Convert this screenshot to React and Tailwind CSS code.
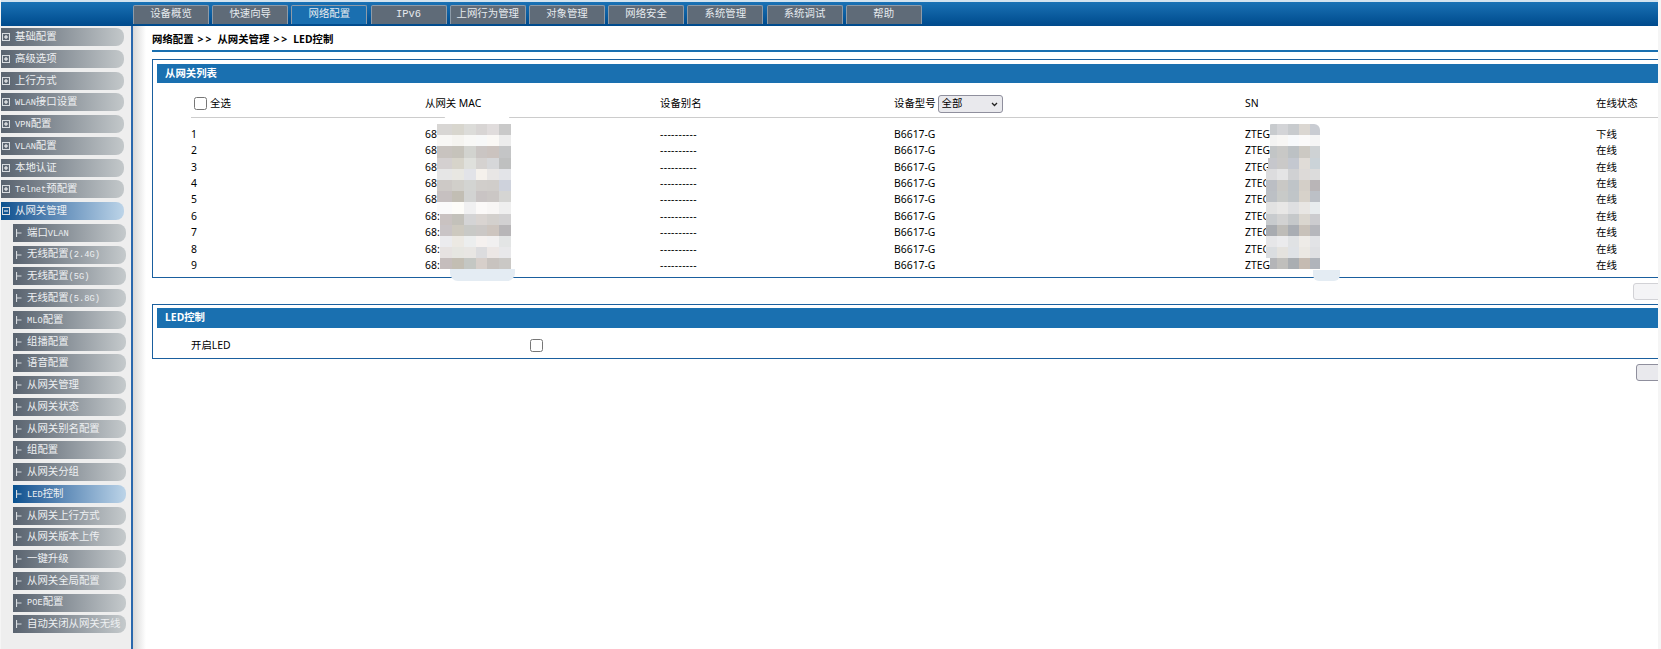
import React from "react";

const cjk = '"Noto Sans CJK SC"';

const tabs = ["设备概览", "快速向导", "网络配置", "IPv6", "上网行为管理", "对象管理", "网络安全", "系统管理", "系统调试", "帮助"];

const topMenu = ["基础配置", "高级选项", "上行方式", "WLAN接口设置", "VPN配置", "VLAN配置", "本地认证", "Telnet预配置"];

const subMenu = [
  "端口VLAN",
  "无线配置(2.4G)",
  "无线配置(5G)",
  "无线配置(5.8G)",
  "MLO配置",
  "组播配置",
  "语音配置",
  "从网关管理",
  "从网关状态",
  "从网关别名配置",
  "组配置",
  "从网关分组",
  "LED控制",
  "从网关上行方式",
  "从网关版本上传",
  "一键升级",
  "从网关全局配置",
  "POE配置",
  "自动关闭从网关无线",
];

const rows = [
  { id: 1, mac: "68", sn: "ZTEG", status: "下线" },
  { id: 2, mac: "68", sn: "ZTEG", status: "在线" },
  { id: 3, mac: "68", sn: "ZTEG", status: "在线" },
  { id: 4, mac: "68", sn: "ZTEG", status: "在线" },
  { id: 5, mac: "68", sn: "ZTEG", status: "在线" },
  { id: 6, mac: "68:", sn: "ZTEG", status: "在线" },
  { id: 7, mac: "68:", sn: "ZTEG", status: "在线" },
  { id: 8, mac: "68:", sn: "ZTEG", status: "在线" },
  { id: 9, mac: "68:", sn: "ZTEG", status: "在线" },
];

// 打码区域的色块
const mosaicMac = [
  "d8d6d4 d8d6ce dcdcd9 d8d5d4 e0dcdc c9c9c9",
  "f8f7f5 f5f4f0 f8f8f6 f7f8f8 faf8f5 ececec",
  "c8c3bf c6c3bb d2d3cf cac5c3 cbc3bf c4c5c6",
  "d4d0d0 d7d4ca dfe0dc d5d2d0 d6d7d9 bfc0c0",
  "e6e6e6 e8e7e2 e2e3e8 f5f1ec e8e6e5 e3e4e8",
  "cdc9c6 d1cfca d3d4d2 d1cecb d0cdca ced2dc",
  "c6c0c0 c2beb4 d2d3d2 c9c4c4 cbc7c5 d5d5d3",
  "fafafa fdfcf8 f0f0f1 fbf9f8 f8f6f5 efefef",
  "c9c2c1 c3c1ba d4d4d5 d9d4d1 d3d0cd d2d1d2",
  "c9c4c6 cdc9bf c8c9c6 cbc8c6 cdc5bf b8b6b8",
  "ebebee ece9e3 eceeee f5f1ef f1f0f0 e3e5e5",
  "e6e2e1 e6e6e1 e8e6e3 dcdcde ece7e5 e8e8ea",
  "c5bdbc c3beb3 c4c7c3 d7cfca c8c3bf cac8c5",
];

const mosaicSn = [
  "c8cbce d3d4d7 c8cbce dbd7d2 c9ccd2",
  "f3f3f2 f7f6f4 f7f9fb fbfafa f5f5f5",
  "c2c5c6 c8c8c6 bcc1c4 ccc9c3 ced2d4",
  "c6c7cc cac9c8 c4c8d0 e0dcd7 cbd3d8",
  "dcdcde e4e4e5 d0d1d3 dddad8 dcdcdc",
  "bbbec4 c9c8c5 bfc4c8 d4cfc8 b9b5b7",
  "bcc0c5 c8cac8 c0c5c8 d7d2ca bcc0c6",
  "e2e2e2 e8e7e6 dedfe1 e8e6e3 e8ecee",
  "c8cbce d2d2d2 c5c8ca dad6cf cccccf",
  "a8abb0 bebcb8 a9adb3 c8c1b9 b6b7bc",
  "e6e6e8 ebebed e0e2e4 eeebe7 e2e3e6",
  "dadde0 e4e2de dfe2e6 ebe8e3 dfe0e3",
  "b4b5b8 c0bfbc aaaeb2 c5bbb2 b0b4bb",
];

const macInset = [0, 0, 0, 0, 0, 0, 0, 0, 3, 3, 3, 3, 3];
const snInset = [4, 4, 4, 2, 0, 0, 0, 0, 0, 0, 0, 0, 4];

// 侧边栏的西文是等宽的半角宽度
const MenuText = ({ text }) => (
  <span className="whitespace-nowrap">
    {text.split(/([A-Za-z0-9.()]+)/).map((part, i) =>
      /^[A-Za-z0-9.()]+$/.test(part) ? (
        <span key={i} className="font-['Liberation_Mono',monospace] text-[8.7px]">
          {part}
        </span>
      ) : (
        <span key={i}>{part}</span>
      )
    )}
  </span>
);

const BoxIcon = ({ open }) => (
  <svg width="8" height="8" viewBox="0 0 8 8" className="shrink-0">
    <rect x="0.5" y="0.5" width="7" height="7" fill="none" stroke="#d8dce0" />
    <path d="M2 4H6" stroke="#ffffff" />
    {!open && <path d="M4 2V6" stroke="#ffffff" />}
  </svg>
);

const TreeIcon = () => (
  <svg width="6" height="8" viewBox="0 0 6 8" className="shrink-0">
    <path d="M0.5 0V8M0.5 4H5.5" stroke="#d8dce0" strokeWidth="1.2" />
  </svg>
);

const Mosaic = ({ data, cell, className, insets, extra = 0 }) => (
  <div className={`absolute flex flex-col overflow-hidden ${className}`}>
    {data.map((row, r) => (
      <div key={r} className="flex" style={{ height: 11.2, marginLeft: insets[r] }}>
        {row.split(" ").map((c, i) => (
          <div key={i} style={{ width: i === 0 ? cell + extra - insets[r] : cell, background: `#${c}` }} />
        ))}
      </div>
    ))}
  </div>
);

const Sidebar = () => (
  <aside className="w-[132px] shrink-0 bg-[#eeeeee] pt-[2px] flex flex-col gap-[3.75px] border-r-2 border-[#2a68ad] text-[10.4px] text-[#eef0f2]">
    {topMenu.map((m) => (
      <div
        key={m}
        className="w-[123px] h-[18px] shrink-0 flex items-center gap-[5px] pl-[1px] rounded-r-lg bg-gradient-to-r from-[#59636f] to-[#c3c8ca]"
      >
        <BoxIcon />
        <MenuText text={m} />
      </div>
    ))}
    <div className="w-[123px] h-[18px] shrink-0 flex items-center gap-[5px] pl-[1px] rounded-r-lg bg-gradient-to-r from-[#07518f] to-[#bcd4e8]">
      <BoxIcon open />
      <MenuText text="从网关管理" />
    </div>
    {subMenu.map((m) => (
      <div
        key={m}
        className={`ml-[12px] w-[113px] h-[18px] shrink-0 flex items-center gap-[5px] pl-[3px] rounded-r-lg bg-gradient-to-r ${
          m === "LED控制" ? "from-[#07518f] to-[#bcd4e8]" : "from-[#59636f] to-[#c5cacc]"
        }`}
      >
        <TreeIcon />
        <MenuText text={m} />
      </div>
    ))}
  </aside>
);

export default function App() {
  return (
    <div
      className="relative w-[1661px] h-[649px] overflow-hidden bg-[#f5f5f5] pl-px pr-[3px] text-[10.4px] text-black flex flex-col"
      style={{ fontFamily: `"Noto Sans", ${cjk}, sans-serif` }}
    >
      {/* 顶部导航 */}
      <header className="h-[26px] shrink-0 border-t-[2px] border-[#d3e3ef] bg-gradient-to-b from-[#1a72b5] to-[#004a8c] flex gap-[3.2px] pl-[132px] pt-[3px]">
        {tabs.map((t) => (
          <div
            key={t}
            className={`w-[76px] h-[19px] flex items-center justify-center rounded-t-[2px] border-t border-x border-[#8e9ba8] text-[#e6eaee] ${
              t === "网络配置" ? "bg-[#1a6fb0]" : "bg-[#5f6b78]"
            }`}
            style={{ fontFamily: `"Liberation Mono", ${cjk}, monospace` }}
          >
            {t}
          </div>
        ))}
      </header>

      <div className="flex flex-1 min-h-0">
        <Sidebar />

        {/* 主内容 */}
        <main className="flex-1 min-w-0 overflow-hidden bg-[linear-gradient(to_right,#d8d8d8,#ffffff_13px)] pl-[19px]">
          <div className="h-[26px] flex items-end gap-[4px] pb-[2px] border-b-2 border-[#1a6fb0] font-bold">
            <span>网络配置</span>
            <span className="tracking-[2px]">&gt;&gt;</span>
            <span>从网关管理</span>
            <span className="tracking-[2px]">&gt;&gt;</span>
            <span>LED控制</span>
          </div>

          <section className="mt-[7px] border-y border-l border-[#1a5f9e] pt-[4px] pl-[4px] pb-[3px]">
            <div className="h-[19px] bg-[#1a70b0] text-white font-bold flex items-center pl-[8px]">从网关列表</div>
            <div className="pl-[34px]">
              <div className="h-[35px] pt-[8px] grid grid-cols-[234px_235px_234px_351px_351px_1fr] items-center border-b border-[#cccccc]">
                <label className="flex items-center gap-[3px] pl-[3px]">
                  <input type="checkbox" className="w-[13px] h-[13px]" />
                  全选
                </label>
                <div>从网关 MAC</div>
                <div>设备别名</div>
                <div className="flex items-center gap-[2px]">
                  设备型号
                  <div className="relative">
                    <select className="block appearance-none w-[65px] h-[18px] pl-[3px] text-[10.4px] bg-[#e9e9ed] border border-[#8f8f9d] rounded-[3px]">
                      <option>全部</option>
                    </select>
                    <svg width="7" height="5" viewBox="0 0 7 5" className="absolute right-[5px] top-[7px]">
                      <path d="M1 1L3.5 3.5L6 1" fill="none" stroke="#222222" strokeWidth="1.3" />
                    </svg>
                  </div>
                </div>
                <div>SN</div>
                <div>在线状态</div>
              </div>
              <div className="pt-[8.5px]">
                {rows.map((r) => (
                  <div
                    key={r.id}
                    className="h-[16.4px] grid grid-cols-[234px_235px_234px_351px_351px_1fr] items-center"
                  >
                    <div>{r.id}</div>
                    <div>{r.mac}</div>
                    <div className="tracking-[0.35px]">----------</div>
                    <div>B6617-G</div>
                    <div>{r.sn}</div>
                    <div>{r.status}</div>
                  </div>
                ))}
              </div>
            </div>
          </section>

          <div className="flex justify-end mt-[4.5px] -mr-[40px]">
            <button className="w-[65px] h-[17px] bg-[#f4f4f6] border border-[#d2d2d6] rounded-[3px]" />
          </div>

          <section className="mt-[4px] border-y border-l border-[#1a5f9e] pt-[3px] pl-[4px]">
            <div className="h-[20px] pt-[1px] bg-[#1a70b0] text-white font-bold flex items-center pl-[8px]">LED控制</div>
            <div className="h-[30px] pt-[6px] grid grid-cols-[339px_1fr] items-center pl-[34px]">
              <div>开启LED</div>
              <input type="checkbox" className="w-[13px] h-[13px]" />
            </div>
          </section>

          <div className="flex justify-end mt-[5px] -mr-[43px]">
            <button className="w-[65px] h-[17px] bg-[#e9e9ed] border border-[#8f8f9d] rounded-[3px]" />
          </div>
        </main>
      </div>

      {/* 打码遮挡 */}
      <div className="absolute left-[443px] top-[113px] w-[68px] h-[12px] rounded-t-[10px] bg-white" />
      <Mosaic data={mosaicMac} cell={11.85} extra={3} insets={macInset} className="left-[437px] top-[124px]" />
      <div className="absolute left-[450px] top-[269px] w-[65px] h-[12px] rounded-b-[8px] bg-[#e4ecf3]" />
      <Mosaic data={mosaicSn} cell={10.9} insets={snInset} className="left-[1266px] top-[124px] rounded-t-[6px]" />
      <div className="absolute left-[1313px] top-[270px] w-[27px] h-[11px] rounded-b-[6px] bg-[#e4ecf3]" />
    </div>
  );
}
